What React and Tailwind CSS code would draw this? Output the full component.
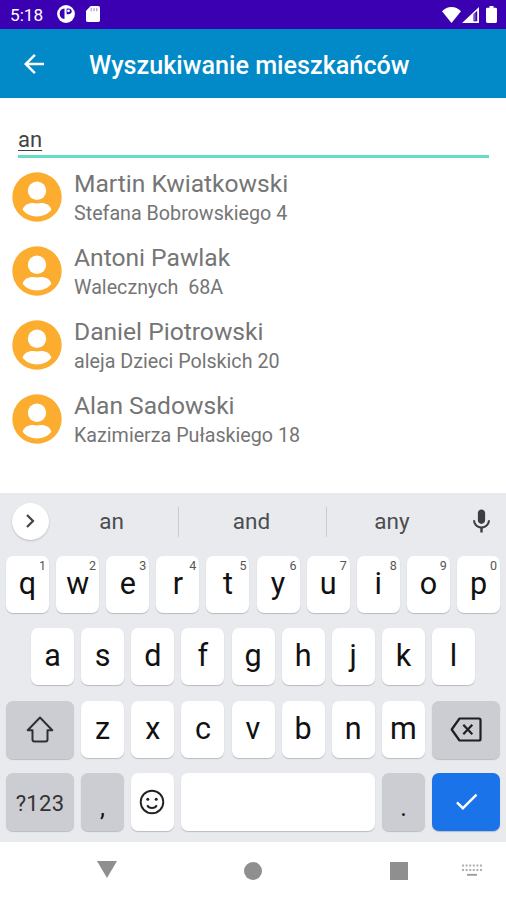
import { MdArrowBack, MdCheck, MdMic } from 'react-icons/md';

const RESIDENTS = [
  { name: 'Martin Kwiatkowski', address: 'Stefana Bobrowskiego 4' },
  { name: 'Antoni Pawlak', address: 'Walecznych  68A' },
  { name: 'Daniel Piotrowski', address: 'aleja Dzieci Polskich 20' },
  { name: 'Alan Sadowski', address: 'Kazimierza Pułaskiego 18' },
];

const TOP_ROW = ['q', 'w', 'e', 'r', 't', 'y', 'u', 'i', 'o', 'p'];
const HOME_ROW = ['a', 's', 'd', 'f', 'g', 'h', 'j', 'k', 'l'];
const BOTTOM_ROW = ['z', 'x', 'c', 'v', 'b', 'n', 'm'];

function StatusBar() {
  return (
    <div className="flex h-[29px] items-center justify-between bg-[#3a00b1] pl-[10px] pr-[9px] text-white">
      <div className="flex items-center">
        <span className="w-[47px] pt-[2px] text-[17.2px] leading-none">5:18</span>
        <svg className="size-[18px]" viewBox="0 0 18 18">
          <circle cx="9" cy="9" r="8.9" fill="#fff" />
          <path d="M7.500 3.400C4.300 3.400 2.700 5.500 2.700 8.600s1.600 5.400 4.800 5.400z" fill="#3a00b1" />
          <path d="M9.600 3.400h1.900c2 0 3.200 1.300 3.200 2.900S13.500 9.200 11.500 9.200H9.600z" fill="#3a00b1" />
          <circle cx="11.500" cy="5.800" r="1.400" fill="#fff" />
        </svg>
        <svg className="ml-[11px] h-[16px] w-[14px]" viewBox="0 0 14 16">
          <path d="M4.700 0H12.300a1.700 1.700 0 0 1 1.700 1.700V14.300a1.700 1.700 0 0 1-1.700 1.700H1.700A1.700 1.700 0 0 1 0 14.300V4.700z" fill="#fff" />
          <path d="M5.200 2.200v3M8 2.200v3M10.800 2.200v3" stroke="#3a00b1" strokeWidth="1" opacity="0.500" />
        </svg>
      </div>
      <div className="flex items-center">
        <svg className="h-[16px] w-[19px]" viewBox="0 0 19 16">
          <path d="M9.500 16 0 4.200C2.600 1.500 6 0 9.500 0S16.400 1.500 19 4.200z" fill="#fff" />
        </svg>
        <svg className="ml-[1px] h-[16px] w-[17px]" viewBox="0 0 17 16">
          <path d="M0 16 17 0V16z" fill="#fff" />
          <path d="M11.500 7.200 15.200 3.800V14.200H11.500z" fill="#3a00b1" />
          <path d="M12.900 6.500v7" stroke="#fff" strokeWidth="0.800" opacity="0.700" />
        </svg>
        <svg className="ml-[7px] h-[17px] w-[11px]" viewBox="0 0 11 17">
          <path d="M3.500 0h4v1.700H9.600A1.400 1.400 0 0 1 11 3.100V15.600A1.400 1.400 0 0 1 9.600 17H1.400A1.400 1.400 0 0 1 0 15.600V3.100A1.400 1.400 0 0 1 1.400 1.700H3.500z" fill="#fff" />
        </svg>
      </div>
    </div>
  );
}

function Avatar() {
  return (
    <svg className="size-[50px] shrink-0" viewBox="0 0 50 50">
      <circle cx="25" cy="25" r="24.700" fill="#fcad2f" />
      <circle cx="25" cy="18.700" r="9.200" fill="#fff" />
      <path d="M10.600 37.600C12 33 16.500 30.900 21 31c2.700.5 5.300.5 8 0 4.500-.1 9 2 10.400 6.600-2.500 4.200-8.200 6.900-14.400 6.900s-11.900-2.700-14.400-6.900z" fill="#fff" />
    </svg>
  );
}

function Resident({ name, address }) {
  return (
    <li className="flex h-[73.8px] items-start pl-3">
      <Avatar />
      <div className="flex flex-col pl-3 whitespace-pre text-[#757575]">
        <span className="-mt-[3px] text-[24.6px] leading-[30px]">{name}</span>
        <span className="text-[19.7px] leading-[30px]">{address}</span>
      </div>
    </li>
  );
}

function Key({ label, hint }) {
  return (
    <div className="relative flex h-[57px] w-[43px] justify-center rounded-[7px] bg-white pt-[9px] text-[30.5px] leading-[38px] text-[#111] shadow-[0_1px_1px_#b9bcc1]">
      {label}
      {hint && <span className="absolute top-[3px] right-[3px] text-[12.5px] leading-[14px] text-[#555]">{hint}</span>}
    </div>
  );
}

function Suggestions() {
  return (
    <div className="flex h-[56px] items-center pl-3">
      <div className="flex size-[37px] items-center justify-center rounded-full bg-white shadow-[0_1px_2px_#b9bcc1]">
        <svg className="h-[14px] w-[9px]" viewBox="0 0 9 14" fill="none" stroke="#444" strokeWidth="2.200">
          <path d="M1 1 7 7 1 13" />
        </svg>
      </div>
      <div className="flex flex-1 items-center pt-px text-[22.5px] text-[#4b4d50]">
        <span className="w-[129px] pr-[4px] text-center">an</span>
        <span className="h-[30px] w-px bg-[#c9cbcf]" />
        <span className="w-[147px] pr-[2px] text-center">and</span>
        <span className="h-[30px] w-px bg-[#c9cbcf]" />
        <span className="w-[130px] text-center">any</span>
      </div>
      <MdMic className="mr-[10px] size-[29px] text-[#3c3e41]" />
    </div>
  );
}

function Keyboard() {
  return (
    <div className="flex h-[349px] flex-col bg-[#e8eaed]">
      <Suggestions />
      <div className="flex flex-col gap-[15.3px] px-[6px] pt-[7px]">
        <div className="flex justify-between">
          {TOP_ROW.map((letter, i) => (
            <Key key={letter} label={letter} hint={String((i + 1) % 10)} />
          ))}
        </div>
        <div className="flex justify-between px-[25px]">
          {HOME_ROW.map((letter) => (
            <Key key={letter} label={letter} />
          ))}
        </div>
        <div className="flex justify-between">
          <div className="flex h-[58px] w-[68px] items-center justify-center rounded-[7px] bg-[#cccdd2] shadow-[0_1px_1px_#b9bcc1]">
            <svg className="h-[27px] w-[28px]" viewBox="0 0 28 27" fill="none" stroke="#2e3033" strokeWidth="2" strokeLinejoin="round">
              <path d="M14 1.500 26.300 14.200H21.500V23.500a2 2 0 0 1-2 2H8.500a2 2 0 0 1-2-2V14.200H1.700z" />
            </svg>
          </div>
          {BOTTOM_ROW.map((letter) => (
            <Key key={letter} label={letter} />
          ))}
          <div className="flex h-[58px] w-[68px] items-center justify-center rounded-[7px] bg-[#cccdd2] shadow-[0_1px_1px_#b9bcc1]">
            <svg className="h-[25px] w-[32px]" viewBox="0 0 32 25" fill="none" stroke="#1d1f21" strokeWidth="2.200" strokeLinejoin="round">
              <path d="M9.500 1.500H29a1.500 1.500 0 0 1 1.500 1.500v19a1.500 1.500 0 0 1-1.500 1.500H9.500L1.700 12.500z" />
              <path d="M13.300 7.800 22.300 17.200M22.300 7.800 13.300 17.200" />
            </svg>
          </div>
        </div>
        <div className="-mt-[1px] flex justify-between">
          <div className="flex h-[58px] w-[68px] items-center justify-center rounded-[7px] bg-[#cccdd2] pt-[3px] text-[22px] tracking-[0.3px] text-[#333] shadow-[0_1px_1px_#b9bcc1]">
            ?123
          </div>
          <div className="flex h-[58px] w-[43px] justify-center rounded-[7px] bg-[#cccdd2] pt-[16px] text-[25px] leading-[38px] text-[#111] shadow-[0_1px_1px_#b9bcc1]">
            ,
          </div>
          <div className="flex h-[58px] w-[43px] items-center justify-center rounded-[7px] bg-white pr-px shadow-[0_1px_1px_#b9bcc1]">
            <svg className="size-[26px]" viewBox="0 0 26 26" fill="none" stroke="#222" strokeWidth="1.900">
              <circle cx="13" cy="13" r="11.300" />
              <path d="M8.200 16.300c1 1.900 2.800 2.700 4.800 2.700s3.800-.8 4.800-2.700" />
              <circle cx="8.800" cy="10.300" r="1.500" fill="#222" stroke="none" />
              <circle cx="17.200" cy="10.300" r="1.500" fill="#222" stroke="none" />
            </svg>
          </div>
          <div className="h-[58px] w-[194px] rounded-[7px] bg-white shadow-[0_1px_1px_#b9bcc1]" />
          <div className="flex h-[58px] w-[43px] justify-center rounded-[7px] bg-[#cccdd2] pt-[16px] text-[25px] leading-[38px] text-[#111] shadow-[0_1px_1px_#b9bcc1]">
            .
          </div>
          <div className="flex h-[58px] w-[68px] items-center justify-center rounded-[7px] bg-[#1a73e8] shadow-[0_1px_1px_#b9bcc1]">
            <MdCheck className="size-[29px] text-white" />
          </div>
        </div>
      </div>
    </div>
  );
}

function NavigationBar() {
  return (
    <div className="flex h-[58px] items-center bg-white pl-[97px]">
      <svg className="mb-[3px] h-[17px] w-[20px]" viewBox="0 0 20 17">
        <path d="M0 0H20L10 17z" fill="#8f8f8f" />
      </svg>
      <div className="ml-[127px] size-[18px] rounded-full bg-[#8f8f8f]" />
      <div className="ml-[128px] size-[18px] bg-[#8f8f8f]" />
      <svg className="mb-[2px] ml-[54px] h-[12px] w-[20px]" viewBox="0 0 20 12" stroke="#9a9a9a">
        <path d="M0 1.500H20M0 6H20" strokeWidth="2" strokeDasharray="2 1.600" opacity="0.800" />
        <path d="M5 10.800H15" strokeWidth="1.800" />
      </svg>
    </div>
  );
}

export default function App() {
  return (
    <div className="flex h-[900px] w-[506px] flex-col overflow-hidden bg-white font-['Roboto',sans-serif]">
      <StatusBar />
      <header className="flex h-[69px] items-center bg-[#0289c7] pl-[19px] text-white">
        <MdArrowBack className="size-[30px]" />
        <h1 className="pl-10 pt-[5px] text-[25.2px] font-medium">Wyszukiwanie mieszkańców</h1>
      </header>
      <main className="flex flex-1 flex-col pt-[27px]">
        <div className="ml-[18px] mr-[17px] h-[33px] border-b-3 border-[#65dcc8] text-[22px] leading-[30px] text-[#444]">
          <span className="underline decoration-1 underline-offset-[3px]">an</span>
        </div>
        <ul className="pt-[14.3px]">
          {RESIDENTS.map((resident) => (
            <Resident key={resident.name} {...resident} />
          ))}
        </ul>
      </main>
      <Keyboard />
      <NavigationBar />
    </div>
  );
}
